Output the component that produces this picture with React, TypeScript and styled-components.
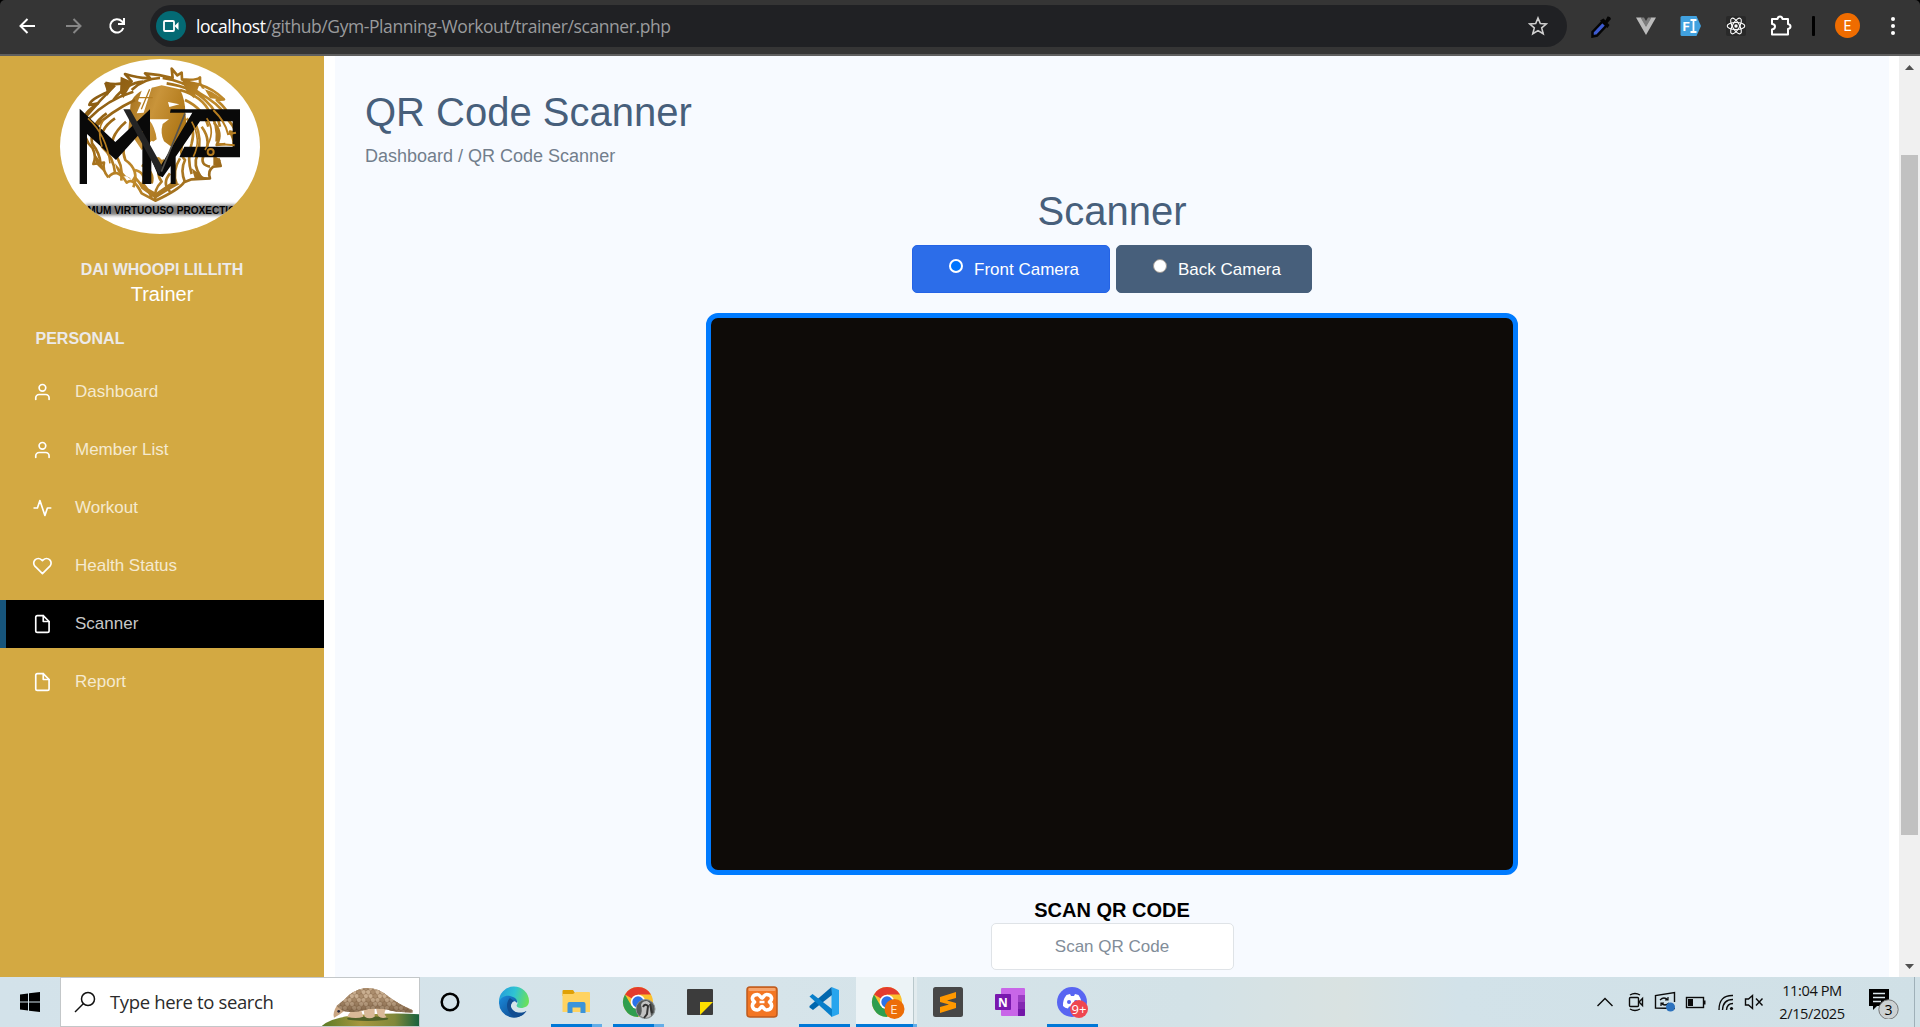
import React from "react";
import styled, { createGlobalStyle } from "styled-components";

const sans = `"Liberation Sans", Arial, sans-serif`;
const ui = `"Open Sans", "Noto Sans", sans-serif`;

const GlobalStyle = createGlobalStyle`
  *, *::before, *::after { box-sizing: border-box; }
  body { margin: 0; background: #fff; overflow: hidden; }
  svg { display: block; flex: none; }
  h1, h2, p { margin: 0; font-weight: 400; }
`;

const Screen = styled.div`
  display: flex;
  flex-direction: column;
  width: 1920px;
  height: 1027px;
  overflow: hidden;
  font-family: ${sans};
`;

/* ---------- browser toolbar ---------- */

const Toolbar = styled.header`
  display: flex;
  align-items: center;
  height: 56px;
  padding: 0 0 3px 0;
  background: #353535;
  border-bottom: 2px solid #5f5f5f;
  border-radius: 5px 5px 0 0;
  font-family: ${ui};
`;

const ToolbarBack = styled.div`
  background: #000;
  flex: none;
`;

const NavButtons = styled.div`
  display: flex;
  align-items: center;
  gap: 24.5px;
  width: 150px;
  padding-left: 18px;
`;

const AddressBar = styled.div`
  display: flex;
  align-items: center;
  width: 1417px;
  height: 42px;
  margin-top: 1px;
  padding: 0 19px 0 6px;
  border-radius: 21px;
  background: #202124;
`;

const CameraBadge = styled.span`
  display: grid;
  place-items: center;
  width: 30px;
  height: 30px;
  border-radius: 50%;
  background: #046a74;
`;

const Url = styled.span`
  flex: 1;
  margin-left: 10px;
  color: #9a9b9d;
  font-size: 17.5px;
  line-height: 30px;
  letter-spacing: -0.42px;
  white-space: nowrap;
  b { color: #fff; font-weight: 400; }
`;

const Extensions = styled.div`
  display: flex;
  align-items: center;
  flex: 1;
  gap: 21px;
  padding-left: 22px;
`;

const Separator = styled.span`
  width: 3px;
  height: 20px;
  margin: 0 -1px 0 -2px;
  border-radius: 1px;
  background: #000;
`;

const Profile = styled.span`
  display: grid;
  place-items: center;
  width: 25px;
  height: 25px;
  border-radius: 50%;
  background: #ef6c00;
  color: #fff;
  font-family: Roboto, sans-serif;
  font-size: 14px;
`;

/* ---------- page ---------- */

const Body = styled.div`
  display: flex;
  height: 921px;
  background: #fff;
`;

const Sidebar = styled.aside`
  width: 324px;
  padding-top: 3px;
  background: #d3a942;
  overflow: hidden;
`;

const Avatar = styled.div`
  width: 200px;
  height: 175px;
  margin-left: 60px;
  border-radius: 50%;
  overflow: hidden;
  background: #fff;
`;

const MemberName = styled.p`
  margin-top: 24px;
  color: #eceaea;
  font-size: 16px;
  font-weight: 700;
  line-height: 24px;
  text-align: center;
`;

const Role = styled.p`
  color: #fff;
  font-size: 20px;
  line-height: 24px;
  text-align: center;
`;

const SectionLabel = styled.p`
  padding: 21px 0 0 35.5px;
  color: #eceaea;
  font-size: 16px;
  font-weight: 700;
  line-height: 24px;
`;

const Menu = styled.nav`
  display: flex;
  flex-direction: column;
  gap: 10px;
  padding-top: 17px;
`;

const MenuItem = styled.a<{ $active?: boolean }>`
  display: flex;
  align-items: center;
  gap: 23px;
  height: 48px;
  padding-left: ${(p) => (p.$active ? 26 : 32)}px;
  border-left: ${(p) => (p.$active ? "6px solid #17557c" : "0")};
  background: ${(p) => (p.$active ? "#000" : "transparent")};
  color: ${(p) => (p.$active ? "#c8c8c8" : "#f5ead0")};
  font-size: 17px;
  line-height: 24px;
  svg { color: #fff; }
`;

const Main = styled.main`
  width: 1554px;
  margin: 0 10px 0 11px;
  padding: 32px 30px 0;
  background: #f7faff;
  overflow: hidden;
`;

const Title = styled.h1`
  color: #475f7b;
  font-size: 40px;
  line-height: 48px;
`;

const Breadcrumb = styled.p`
  margin-top: 7px;
  color: #727e8c;
  font-size: 18px;
  line-height: 27px;
`;

const Scanner = styled.section`
  display: flex;
  flex-direction: column;
  align-items: center;
  margin-top: 17px;
`;

const CameraSwitch = styled.div`
  display: flex;
  gap: 6px;
  margin: 10px 0 20px;
`;

const CameraOption = styled.label<{ $active?: boolean }>`
  display: flex;
  width: ${(p) => (p.$active ? 198 : 196)}px;
  height: 48px;
  padding-left: 36px;
  border: 1px solid ${(p) => (p.$active ? "#2463e6" : "#475f7b")};
  border-radius: 5px;
  background: ${(p) => (p.$active ? "#2c6de9" : "#475f7b")};
  color: #fff;
  font-size: 17px;
  line-height: 48px;
`;

const Radio = styled.span<{ $active?: boolean }>`
  width: 14px;
  height: 14px;
  margin: 13px 11px 0 0;
  border: ${(p) => (p.$active ? "2px solid #fff" : "1px solid #9a948e")};
  border-radius: 50%;
  background: ${(p) => (p.$active ? "#0075ff" : "#fff")};
`;

const Preview = styled.div`
  width: 812px;
  height: 562px;
  border: 5px solid #007bff;
  border-radius: 12px;
  background: #0e0b08;
`;

const FieldLabel = styled.label`
  padding-top: 22px;
  height: 48px;
  color: #000;
  font-size: 20px;
  font-weight: 700;
  line-height: 27px;
`;

const Field = styled.input`
  width: 243px;
  height: 47px;
  padding: 0;
  border: 1px solid #dfe3e7;
  border-radius: 5px;
  background: #fff;
  font-family: ${sans};
  font-size: 17px;
  text-align: center;
  &::placeholder { color: #828d99; opacity: 1; }
`;

const ScrollTrack = styled.div`
  display: flex;
  flex-direction: column;
  align-items: center;
  width: 21px;
  padding: 9px 0 8px;
  background: #f0f0f0;
`;

const ScrollThumb = styled.div`
  width: 17px;
  height: 680px;
  margin: 85px 0 auto;
  background: #c1c1c1;
`;

/* ---------- taskbar ---------- */

const Taskbar = styled.footer`
  display: flex;
  height: 50px;
  background: linear-gradient(90deg, #d3e2ea 0%, #d6e4ea 40%, #d3e2e7 62%, #d9e2e1 70%, #d2e2e9 76%, #d0e0e6 100%);
  color: #000;
  font-family: ${ui};
`;

const StartButton = styled.div`
  display: grid;
  place-items: center;
  width: 60px;
`;

const SearchBox = styled.div`
  display: flex;
  align-items: center;
  width: 360px;
  padding-left: 13px;
  border: 1px solid #c3c7c9;
  background: #fff;
  overflow: hidden;
`;

const SearchText = styled.span`
  flex: 1;
  margin: 0 0 2px 14px;
  color: #2b2b2b;
  font-size: 18.5px;
  letter-spacing: -0.35px;
  white-space: nowrap;
`;

const CortanaButton = styled.div`
  display: grid;
  place-items: center;
  width: 60px;
  margin-right: 3px;
`;

const TaskCell = styled.div<{ $focused?: boolean }>`
  display: flex;
  flex-direction: column;
  align-items: center;
  justify-content: space-between;
  width: 62px;
  padding: 9px 0 0 ${(p) => (p.$focused ? 1 : 0)}px;
  background: ${(p) => (p.$focused ? "linear-gradient(90deg, transparent 1px, #ecf3f6 1px, #ecf3f6 58px, #b9c8cc 58px, #b9c8cc 59px, #e2ebee 59px)" : "none")};
`;

const Running = styled.span<{ $split?: boolean; $wide?: boolean }>`
  width: ${(p) => (p.$wide ? 61 : 51)}px;
  height: 3px;
  background: ${(p) =>
    p.$wide
      ? "linear-gradient(90deg, #0078d7 57px, #63ade8 57px)"
      : p.$split
      ? "linear-gradient(90deg, #0078d7 41px, #63ade8 41px)"
      : "#0078d7"};
`;

const Tray = styled.div`
  display: flex;
  align-items: center;
  margin-left: auto;
`;

const Clock = styled.div`
  display: flex;
  flex-direction: column;
  align-items: center;
  width: 90px;
  margin: 0 8px 0 -3px;
  color: #111;
  font-size: 14.6px;
  line-height: 23px;
  letter-spacing: -0.4px;
  white-space: nowrap;
`;

const ShowDesktop = styled.span`
  width: 6px;
  height: 50px;
  margin-left: 15px;
  border-left: 1px solid #9fb0b8;
`;

/* ---------- drawings ---------- */

type FeatherName = "user" | "activity" | "heart" | "file";

const featherPaths: Record<FeatherName, React.ReactNode> = {
  user: <><path d="M20 21v-2a4 4 0 0 0-4-4H8a4 4 0 0 0-4 4v2" /><circle cx="12" cy="7" r="4" /></>,
  activity: <path d="M22 12h-4l-3 9L9 3l-3 9H2" />,
  heart: <path d="M20.84 4.61a5.5 5.5 0 0 0-7.78 0L12 5.67l-1.06-1.06a5.5 5.5 0 0 0-7.78 7.78l1.06 1.06L12 21.23l7.78-7.78 1.06-1.06a5.5 5.5 0 0 0 0-7.78z" />,
  file: <><path d="M13 2H6a2 2 0 0 0-2 2v16a2 2 0 0 0 2 2h12a2 2 0 0 0 2-2V9z" /><path d="M13 2v7h7" /></>,
};

const Feather = ({ name }: { name: FeatherName }) => (
  <svg width="20" height="20" viewBox="-0.500 0 24 24" fill="none" stroke="currentColor" strokeWidth="2" strokeLinecap="round" strokeLinejoin="round">
    {featherPaths[name]}
  </svg>
);

const LionLogo = () => (
  <svg width="200" height="175" viewBox="180 27 600 525">
    <defs>
      <linearGradient id="gold" gradientUnits="userSpaceOnUse" x1="260" y1="60" x2="640" y2="450">
        <stop offset="0" stopColor="#7e5310" />
        <stop offset="0.35" stopColor="#a06c18" />
        <stop offset="0.6" stopColor="#c28c2c" />
        <stop offset="1" stopColor="#8b5c14" />
      </linearGradient>
      <linearGradient id="face" x1="0" y1="0" x2="1" y2="0.4">
        <stop offset="0" stopColor="#a06d1a" />
        <stop offset="0.5" stopColor="#c9943a" />
        <stop offset="1" stopColor="#b07818" />
      </linearGradient>
      <filter id="soft" x="-10%" y="-60%" width="120%" height="220%"><feGaussianBlur stdDeviation="4" /></filter>
    </defs>
    <path fill="url(#face)" d="M392 158Q410 118 462 112L485 106L540 118Q556 150 556 190L560 225Q545 265 520 290L486 290L455 272L425 300L385 240Z" />
    <g fill="none" stroke="url(#gold)" strokeWidth="8" strokeLinejoin="round">
      <path d="M316 98Q350 108 395 94L375 72Q420 86 450 84L435 70Q480 74 518 84L515 56L532 76L545 68L546 88Q590 92 600 82L600 104Q640 116 672 148L650 150Q684 180 688 200L674 198Q700 225 710 250L690 245Q704 272 700 282" />
      <path d="M316 98L325 125Q270 148 268 165L294 160Q248 190 250 215Q250 270 278 295Q290 320 280 342L312 338Q306 360 325 382" />
      <path d="M345 106Q300 150 258 200M400 125Q320 150 268 205M405 150Q330 185 276 240M320 190Q268 225 276 280Q300 310 302 342M345 205Q292 240 306 290Q340 320 345 368M378 215Q320 265 342 310Q370 340 364 392M388 245Q360 290 376 330Q420 360 400 412" />
      <path d="M430 95Q380 98 340 150M480 84Q430 86 395 120M488 84Q550 92 600 130Q654 160 676 194M500 100Q580 112 620 155Q650 180 660 230M540 120Q610 140 630 190Q655 225 650 275M555 150Q610 175 625 230M560 205Q588 235 575 280Q560 325 575 372M586 220Q608 270 592 315Q578 345 602 380M605 230Q638 275 610 318Q600 345 630 350M642 218Q670 250 650 285L676 282M560 255Q530 305 555 330Q540 360 555 397M540 325Q515 365 530 402" />
      <path d="M405 360Q440 370 428 400Q450 425 455 445M425 345Q465 365 455 400M486 330Q465 370 485 395Q460 420 466 450M510 370Q485 400 510 425M325 382Q350 350 380 398Q400 380 425 430L466 452Q535 420 552 397L575 388L630 385Q622 362 640 350L662 348L655 325" />
    </g>
    <g fill="url(#gold)">
      <path d="M316 98Q332 106 344 104L322 138ZM362 80L398 96L370 145L360 125ZM545 88L600 100L582 145L560 125ZM595 84L605 115L635 125L672 149L630 145Z" />
      <path d="M345 340Q350 370 368 380Q386 374 398 394Q408 384 424 416L466 446Q520 412 540 402L515 396L468 428L432 408L404 375L395 390L376 376Z" />
      <path d="M280 305L304 338L322 376L288 342ZM575 355L610 380L630 385L585 388ZM640 315L662 330L658 350L640 345ZM470 322L488 320L496 340L478 350Z" />
    </g>
    <path fill="#fff" d="M428 114L456 110L431 188L410 190L424 158L414 154ZM504 156L538 163L508 171ZM446 208H507L488 222Q480 250 492 274L514 290L505 316L486 330L456 300L450 282L470 268Q466 232 446 208Z" />
    <path fill="none" stroke="#b47c20" strokeWidth="4" d="M414 143H458M449 118L424 178" />
    <path fill="#090909" d="M239 176L346 276L450 178V320L478 354L577 188H510L512 178H720V322H538L553 290H698V214H600L527 320V402H512V348L488 382L474 376L454 328V402H427V242L348 330L261 252V402H239Z" />
    <path fill="#242424" d="M370 178H390L487 350L477 374Z" />
    <path d="M555 190L484 365" stroke="#55534e" strokeWidth="5" />
    <path d="M264 205Q320 255 330 340M310 210Q290 240 306 290M575 215Q606 270 580 320M620 205Q650 245 615 300" fill="none" stroke="#b67d20" strokeWidth="5" />
    <path d="M640 180Q676 215 684 252L708 248M655 282L704 286" fill="none" stroke="#b67d20" strokeWidth="6" />
    <circle cx="632" cy="306" r="9" fill="#111" stroke="#b67d20" strokeWidth="6" />
    <rect x="256" y="464" width="456" height="32" fill="#2a2a2a" filter="url(#soft)" opacity="0.6" />
    <text x="262" y="493" fontFamily="Liberation Sans" fontWeight="700" fontSize="34" textLength="446" lengthAdjust="spacingAndGlyphs" fill="#000">MUM VIRTUOUSO PROXECTIO</text>
  </svg>
);

const ArrowIcon = ({ color, flip }: { color: string; flip?: boolean }) => (
  <svg width="20" height="20" viewBox="0 0 20 20" fill="none" stroke={color} strokeWidth="2">
    <path d={flip ? "M3 10H17M10.5 3L17.5 10L10.5 17" : "M17 10H3M9.5 3L2.500 10L9.500 17"} />
  </svg>
);

const ChromeLogo = ({ children }: { children?: React.ReactNode }) => (
  <svg width="32" height="32" viewBox="-1 1 32 32" overflow="visible">
    <circle cx="15" cy="17" r="15" fill="#fbc02d" />
    <path d="M15 17L2 9.500A15 15 0 0 1 28 9.500H15Z" fill="#e33b2e" />
    <path d="M2 9.500A15 15 0 0 0 15 32L21.500 20.800L15 17L8.500 20.700Z" fill="#2f9e4f" />
    <circle cx="15" cy="17" r="7.300" fill="#fff" />
    <circle cx="15" cy="17" r="5.700" fill="#2a72e8" />
    {children}
  </svg>
);

const EdgeLogo = () => (
  <svg width="32" height="32" viewBox="0 0 32 32">
    <defs>
      <linearGradient id="edgeTop" x1="0" y1="0.3" x2="1" y2="0.5"><stop offset="0" stopColor="#249ddb" /><stop offset="0.5" stopColor="#2fc3d3" /><stop offset="1" stopColor="#6be05a" /></linearGradient>
      <linearGradient id="edgeLow" x1="0" y1="0" x2="1" y2="0.8"><stop offset="0" stopColor="#1b8bdc" /><stop offset="1" stopColor="#0c3f83" /></linearGradient>
    </defs>
    <path d="M1 16A15 15 0 0 1 31 15C31 20 27 22 23 22C19 22 18 20 19 18.500C20.500 17 19 12 13 12C7 12 2 15 1 18Z" fill="url(#edgeTop)" />
    <path d="M1 17C2 11 8 9 12 10C17 11 20 14 19 17C16 13 12 17 13 21C14 26 23 29 28.500 25A15 15 0 0 1 1 17Z" fill="url(#edgeLow)" />
    <path d="M12 12C7 17 8 27 17 31Q24 31 28.500 25C22 29 14 26 13 21Q12.500 17 16 15Z" fill="#114d91" />
  </svg>
);

const FolderLogo = () => (
  <svg width="32" height="32" viewBox="0 0 32 32">
    <path d="M2.500 5Q2.500 4 3.500 4H13L15 7V10H2.500Z" fill="#dfa006" />
    <path d="M2.500 8H13L16 6H29Q30 6 30 7V26H2.500Z" fill="#ffd361" />
    <path d="M7.500 27V18Q7.500 16 9.500 16H23.500Q25.500 16 25.500 18V27H20.500V21.500H12.500V27Z" fill="#3b94da" />
  </svg>
);

const NotesLogo = () => (
  <svg width="32" height="32" viewBox="0 0 32 32"><rect x="3" y="3" width="26" height="26" rx="1" fill="#3c3c3c" /><path d="M16 16H29L16 29Z" fill="#ffe000" /></svg>
);

const XamppLogo = () => (
  <svg width="32" height="32" viewBox="0 0 32 32">
    <rect x="1" y="1" width="30" height="30" rx="3" fill="#f37623" stroke="#bd5b1f" strokeWidth="1.500" />
    <rect x="2.500" y="2" width="27" height="3" rx="1" fill="#f6a56d" />
    <path d="M11.500 8.500C6 8.500 5 13.500 8.500 16C5 18.500 6 24 11.500 24C14 24 14.500 20.500 16 20.500S18 24 20.500 24C26 24 27 18.500 23.500 16C27 13.500 26 8.500 20.500 8.500C18 8.500 17.500 12 16 12S14 8.500 11.500 8.500Z" fill="none" stroke="#fff" strokeWidth="3.600" strokeLinejoin="round" />
    <path d="M13.500 16H18.500" stroke="#fff" strokeWidth="2.500" />
  </svg>
);

const CodeLogo = () => (
  <svg width="32" height="32" viewBox="0 0 32 32">
    <path d="M23.500 1L31 4V28L23.500 31Z" fill="#27a5ee" />
    <path d="M23.500 1L24 9L5 24L1.500 21.500V20Z" fill="#0067ae" />
    <path d="M1.500 10.500L4.500 8L24 23V31Z" fill="#087fca" />
  </svg>
);

const SublimeLogo = () => (
  <svg width="32" height="32" viewBox="0 0 32 32"><rect x="1" y="1" width="30" height="30" rx="2.500" fill="#474747" /><path d="M8 11L24 6V12L15 14.500L24 17V22L8 27V21L17 18.500L8 16Z" fill="#ff9800" /></svg>
);

const OneNoteLogo = () => (
  <svg width="32" height="32" viewBox="0 0 32 32">
    <rect x="7" y="2" width="24" height="28" rx="1" fill="#c866e8" />
    <path d="M24 9H31V16H24Z" fill="#9c3ec4" /><path d="M24 16H31V23H24Z" fill="#8428b2" /><path d="M24 23H31V29Q31 30 30 30H24Z" fill="#7317a8" />
    <rect x="1" y="8" width="16" height="16" rx="1" fill="#7918ae" />
    <text x="9" y="20.500" textAnchor="middle" fontFamily="Open Sans" fontWeight="700" fontSize="12" fill="#fff">N</text>
  </svg>
);

const DiscordLogo = () => (
  <svg width="32" height="32" viewBox="0 0 32 32" overflow="visible">
    <circle cx="16" cy="16" r="15" fill="#5865f2" />
    <path d="M10.500 9L14 8L15 10H18L19 8L22.500 9Q26 14 25.500 20Q23.500 22.500 21 22.500L20 20.500H13L12 22.500Q9 22 7 20Q6.500 14 10.500 9Z" fill="#fff" />
    <circle cx="13" cy="16" r="2" fill="#5865f2" /><circle cx="20" cy="16" r="2" fill="#5865f2" />
    <circle cx="23" cy="23" r="9" fill="#ef4650" />
    <text x="23" y="27.500" textAnchor="middle" fontFamily="Open Sans" fontSize="13" fill="#fff">9+</text>
  </svg>
);

const Pangolin = () => {
  const scales: React.ReactNode[] = [];
  for (let row = 0; row < 7; row++) {
    for (let col = 0; col < 18; col++) {
      scales.push(
        <path key={`${row}-${col}`} transform={`translate(${1016 + col * 14 + (row % 2) * 7} ${52 + row * 12})`}
          d="M-8 0Q0 -10 8 0Q8 8 0 13Q-8 8 -8 0Z"
          fill={(row * 2 + col) % 3 ? "#c9ae90" : "#ab8d6d"} stroke="#8a6c4e" strokeWidth="1.200" />
      );
    }
  }
  return (
    <svg width="98" height="48" viewBox="965 24 294 144">
      <defs>
        <clipPath id="shell"><path d="M1012 108Q1035 90 1050 74Q1080 52 1108 54Q1140 56 1165 78Q1200 104 1240 121V128Q1190 128 1160 118Q1120 112 1085 122Q1060 130 1030 122Z" /></clipPath>
        <linearGradient id="hill" x1="0" x2="1"><stop offset="0" stopColor="#597a25" /><stop offset="0.4" stopColor="#a7973f" /><stop offset="0.75" stopColor="#80883a" /><stop offset="1" stopColor="#17613d" /></linearGradient>
        <linearGradient id="shade" x1="0" y1="0" x2="0" y2="1"><stop offset="0.4" stopColor="#5a4028" stopOpacity="0" /><stop offset="1" stopColor="#5a4028" stopOpacity="0.55" /></linearGradient>
      </defs>
      <path d="M965 170Q1000 136 1110 133Q1200 128 1260 133V170Z" fill="url(#hill)" />
      <ellipse cx="1105" cy="146" rx="62" ry="7" fill="#3f5524" opacity="0.8" />
      <path d="M1048 132Q1060 112 1084 116L1092 140Q1070 148 1044 140ZM1092 114L1126 110V140Q1110 150 1096 140ZM1130 114L1160 118Q1150 132 1162 142Q1140 148 1134 132Z" fill="#d9b998" />
      <path d="M1014 104L1046 114Q1022 134 1004 143Q998 130 1014 104Z" fill="#c9a582" />
      <g clipPath="url(#shell)"><rect x="1000" y="50" width="245" height="90" fill="#a08467" />{scales}<rect x="1000" y="50" width="245" height="80" fill="url(#shade)" /></g>
      <circle cx="1018" cy="124" r="4" fill="#26283c" />
    </svg>
  );
};

const menu: { label: string; icon: FeatherName; active?: boolean }[] = [
  { label: "Dashboard", icon: "user" },
  { label: "Member List", icon: "user" },
  { label: "Workout", icon: "activity" },
  { label: "Health Status", icon: "heart" },
  { label: "Scanner", icon: "file", active: true },
  { label: "Report", icon: "file" },
];

const GreyBadge = () => (
  <g>
    <circle cx="22.500" cy="24" r="9.500" fill="#565a5a" stroke="#8a9192" />
    <path d="M17 31Q20 27 18 20Q19 16 24 16Q29 18 27 24L28 31Q25 33 22 33Z" fill="#c2c3c3" />
    <path d="M20 22Q22 18 25 21L24 29L21 33M27 19L29 28" stroke="#333" strokeWidth="2" fill="none" />
  </g>
);

const OrangeBadge = () => (
  <g>
    <circle cx="22.500" cy="24" r="10" fill="#ec6d08" />
    <text x="22" y="28.500" textAnchor="middle" fontFamily="Roboto" fontSize="12" fill="#ffe2cc">E</text>
  </g>
);

export default function App() {
  return (
    <Screen>
      <GlobalStyle />
      <ToolbarBack>
        <Toolbar>
          <NavButtons>
            <ArrowIcon color="#fff" />
            <ArrowIcon color="#868686" flip />
            <svg width="20" height="20" viewBox="0 0 20 20" fill="none" stroke="#fff" strokeWidth="2">
              <path d="M16.300 12A6.700 6.700 0 1 1 14.800 5.200L17 7.500" /><path d="M17 2V8H11" />
            </svg>
          </NavButtons>
          <AddressBar>
            <CameraBadge>
              <svg width="18" height="14" viewBox="0 0 18 14"><rect x="2" y="2" width="10" height="10" rx="1" fill="none" stroke="#fff" strokeWidth="1.800" /><path d="M12.500 7L16.500 3V11Z" fill="#fff" /></svg>
            </CameraBadge>
            <Url><b>localhost</b>/github/Gym-Planning-Workout/trainer/scanner.php</Url>
            <svg width="20" height="20" viewBox="0 0 20 20" fill="none" stroke="#cfcfcf" strokeWidth="1.600"><path d="M10 2L12.300 7.600L18.300 8L13.700 11.900L15.200 17.800L10 14.600L4.800 17.800L6.300 11.900L1.700 8L7.700 7.600Z" /></svg>
          </AddressBar>
          <Extensions>
            <svg width="24" height="24" viewBox="0 0 24 24"><path d="M3.500 18L13.500 7.500L17.500 11.500L8 21.500L3.500 22.500Z" fill="#3d5bd0" stroke="#050505" strokeWidth="2.500" /><path d="M11 6.500L14.500 4.500L16.500 6.500L18.500 2.500Q21.500 2 22 5L18.500 9L20.500 11L18.500 14Z" fill="#050505" /></svg>
            <svg width="24" height="24" viewBox="0 0 24 24"><path d="M2 3.500H7L12 12L17 3.500H22L12 21Z" fill="#bcbcbc" /><path d="M6.500 3.500H10L12 7L14 3.500H17.500L12 13Z" fill="#7d7d7d" /></svg>
            <svg width="24" height="24" viewBox="0 0 24 24"><path d="M1.500 3.500Q1.500 2 3 2H17.500L22 12L17.500 22H3Q1.500 22 1.500 20.500Z" fill="#41a1df" /><text x="3.500" y="17" fontFamily="Roboto" fontWeight="700" fontSize="13" fill="#fff">F</text><path d="M11.500 6H17.500M11.500 18H17.500M14.500 6V18" stroke="#fff" strokeWidth="1.800" /></svg>
            <svg width="24" height="24" viewBox="0 0 24 24"><rect x="2" y="2" width="20" height="20" rx="2" fill="#292929" /><g fill="none" stroke="#fff" strokeWidth="1.100"><ellipse cx="12" cy="12" rx="8.800" ry="3.500" /><ellipse cx="12" cy="12" rx="8.800" ry="3.500" transform="rotate(60 12 12)" /><ellipse cx="12" cy="12" rx="8.800" ry="3.500" transform="rotate(120 12 12)" /></g><circle cx="12" cy="12" r="1.700" fill="#fff" /></svg>
            <svg width="24" height="24" viewBox="0 0 24 24"><path d="M3 5H8.500Q9 2.500 11 2.500T13.500 5H19V10Q21.500 10.500 21.500 12.500T19 15V20.500H3V15.500Q6 15 6 12.500T3 10Z" fill="none" stroke="#fff" strokeWidth="2" strokeLinejoin="round" /></svg>
            <Separator />
            <Profile>E</Profile>
            <svg width="24" height="24" viewBox="0 0 24 24" fill="#fff"><circle cx="12" cy="5" r="2" /><circle cx="12" cy="12" r="2" /><circle cx="12" cy="19" r="2" /></svg>
          </Extensions>
        </Toolbar>
      </ToolbarBack>

      <Body>
        <Sidebar>
          <Avatar><LionLogo /></Avatar>
          <MemberName>DAI WHOOPI LILLITH</MemberName>
          <Role>Trainer</Role>
          <SectionLabel>PERSONAL</SectionLabel>
          <Menu>
            {menu.map((m) => (
              <MenuItem key={m.label} $active={m.active}><Feather name={m.icon} />{m.label}</MenuItem>
            ))}
          </Menu>
        </Sidebar>
        <Main>
          <Title>QR Code Scanner</Title>
          <Breadcrumb>Dashboard / QR Code Scanner</Breadcrumb>
          <Scanner>
            <Title as="h2">Scanner</Title>
            <CameraSwitch>
              <CameraOption $active><Radio $active />Front Camera</CameraOption>
              <CameraOption><Radio />Back Camera</CameraOption>
            </CameraSwitch>
            <Preview />
            <FieldLabel>SCAN QR CODE</FieldLabel>
            <Field placeholder="Scan QR Code" />
          </Scanner>
        </Main>
        <ScrollTrack>
          <svg width="9" height="5" viewBox="0 0 9 5"><path d="M0 5L4.500 0L9 5Z" fill="#505050" /></svg>
          <ScrollThumb />
          <svg width="9" height="5" viewBox="0 0 9 5"><path d="M0 0L4.500 5L9 0Z" fill="#505050" /></svg>
        </ScrollTrack>
      </Body>

      <Taskbar>
        <StartButton>
          <svg width="20" height="20" viewBox="0 0 20 20"><path d="M0 2.500L8 1.500V9.500H0ZM9 1.300L20 0V9.500H9ZM0 10.500H8V18.500L0 17.500ZM9 10.500H20V20L9 18.700Z" /></svg>
        </StartButton>
        <SearchBox>
          <svg width="22" height="22" viewBox="0 0 22 22" fill="none" stroke="#111" strokeWidth="1.500"><circle cx="14" cy="8" r="6.500" /><path d="M9.500 12.500L1 21" /></svg>
          <SearchText>Type here to search</SearchText>
          <Pangolin />
        </SearchBox>
        <CortanaButton>
          <svg width="20" height="20" viewBox="0 0 20 20"><circle cx="10" cy="10" r="8.300" fill="none" stroke="#000" strokeWidth="2.500" /></svg>
        </CortanaButton>
        <TaskCell><EdgeLogo /></TaskCell>
        <TaskCell><FolderLogo /><Running $split /></TaskCell>
        <TaskCell><ChromeLogo><GreyBadge /></ChromeLogo><Running $split /></TaskCell>
        <TaskCell><NotesLogo /></TaskCell>
        <TaskCell><XamppLogo /></TaskCell>
        <TaskCell><CodeLogo /><Running /></TaskCell>
        <TaskCell $focused><ChromeLogo><OrangeBadge /></ChromeLogo><Running $wide /></TaskCell>
        <TaskCell><SublimeLogo /></TaskCell>
        <TaskCell><OneNoteLogo /></TaskCell>
        <TaskCell><DiscordLogo /><Running /></TaskCell>
        <Tray>
          <svg width="180" height="30" viewBox="0 0 180 30" fill="none" stroke="#0b0b0b" strokeWidth="1.400">
            <path d="M7.500 19L15 11.500L22.500 19" />
            <rect x="39.500" y="10.500" width="9" height="9" rx="1" /><path d="M49 15L52.500 11.500V18.500ZM40 8Q45 5 50 8M40 22Q45 25 50 22" />
            <path d="M85 21.500L65.500 21V8.500L84.500 5.500V15" /><path d="M70 13Q74 9 78 13M78 10V13H75M79 16Q75 20 71 16M71 19V16H74" strokeWidth="1.200" /><circle cx="80.500" cy="20" r="4.500" fill="#2c72bd" stroke="none" />
            <rect x="96.500" y="10.500" width="17" height="10" /><path d="M98 12H103V19H98Z" fill="#0b0b0b" stroke="none" /><path d="M114.500 13.500V17.500" strokeWidth="2" />
            <path d="M129 23Q129 8 143 8.500M132.500 23Q133 12.500 143 12.500M136.500 23Q137 16.500 143 16.500" /><circle cx="141.500" cy="21.500" r="1.600" fill="#0b0b0b" stroke="none" />
            <path d="M155.500 12V18H158.500L162.500 21.500V8.500L158.500 12ZM166 11.500L172.500 18.500M172.500 11.500L166 18.500" />
          </svg>
          <Clock><span>11:04 PM</span><span>2/15/2025</span></Clock>
          <svg width="34" height="34" viewBox="0 0 34 34">
            <path d="M4 4H24V21H12L8 25V21H4Z" fill="#000" /><path d="M8 8.500H20M8 12.500H20M8 16.500H16" stroke="#dce8ed" strokeWidth="1.300" />
            <circle cx="23.500" cy="24.500" r="9.700" fill="#ccd1d3" stroke="#777" /><text x="23.500" y="29.500" textAnchor="middle" fontFamily="Open Sans" fontSize="14" fill="#000">3</text>
          </svg>
          <ShowDesktop />
        </Tray>
      </Taskbar>
    </Screen>
  );
}
